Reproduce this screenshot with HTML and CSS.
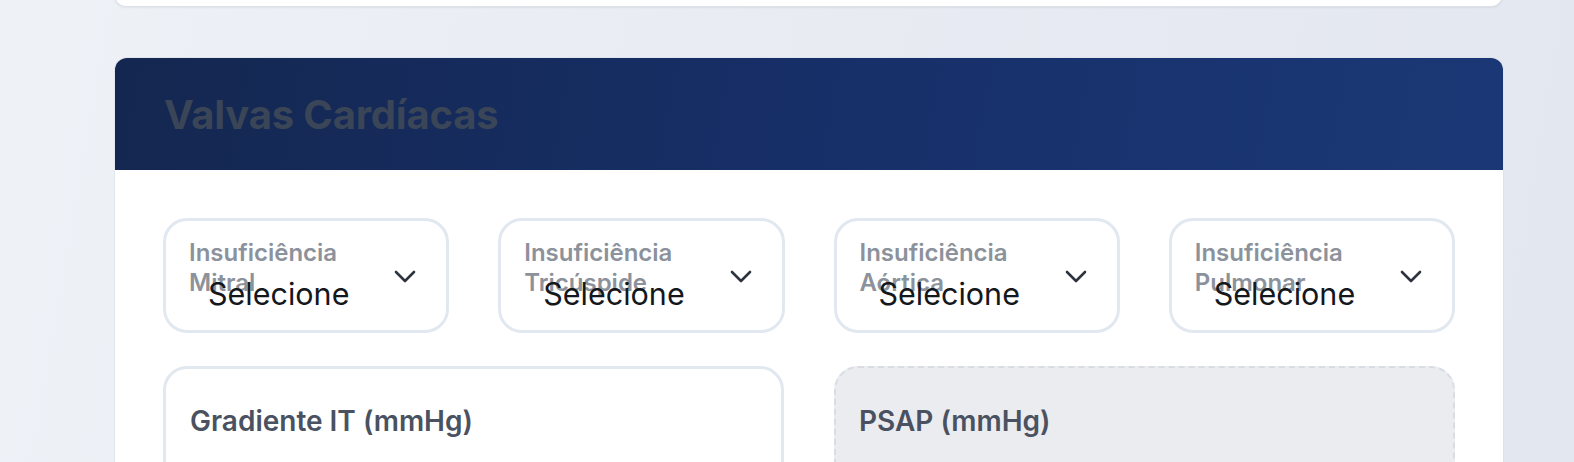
FILE: index.html
```html
<!DOCTYPE html>
<html lang="pt">
<head>
<meta charset="utf-8">
<title>Valvas Cardíacas</title>
<link rel="stylesheet" href="styles.css">
</head>
<body>
<div class="page">
  <div class="top-card"></div>
  <section class="card">
    <header class="card-header">
      <h2 class="card-title">Valvas Cardíacas</h2>
    </header>
    <div class="card-body">
      <div class="grid4">
        <div class="field">
          <span class="field-label">Insuficiência Mitral</span>
          <div class="select"><span class="select-value">Selecione</span>
            <svg class="chev" viewBox="0 0 24 24" width="24" height="24"><path d="M3 7l9 9 9-9" fill="none" stroke="#2d3440" stroke-width="2.6" stroke-linecap="round" stroke-linejoin="round"/></svg>
          </div>
        </div>
        <div class="field">
          <span class="field-label">Insuficiência Tricúspide</span>
          <div class="select"><span class="select-value">Selecione</span>
            <svg class="chev" viewBox="0 0 24 24" width="24" height="24"><path d="M3 7l9 9 9-9" fill="none" stroke="#2d3440" stroke-width="2.6" stroke-linecap="round" stroke-linejoin="round"/></svg>
          </div>
        </div>
        <div class="field">
          <span class="field-label">Insuficiência Aórtica</span>
          <div class="select"><span class="select-value">Selecione</span>
            <svg class="chev" viewBox="0 0 24 24" width="24" height="24"><path d="M3 7l9 9 9-9" fill="none" stroke="#2d3440" stroke-width="2.6" stroke-linecap="round" stroke-linejoin="round"/></svg>
          </div>
        </div>
        <div class="field">
          <span class="field-label">Insuficiência Pulmonar</span>
          <div class="select"><span class="select-value">Selecione</span>
            <svg class="chev" viewBox="0 0 24 24" width="24" height="24"><path d="M3 7l9 9 9-9" fill="none" stroke="#2d3440" stroke-width="2.6" stroke-linecap="round" stroke-linejoin="round"/></svg>
          </div>
        </div>
      </div>
      <div class="grid2">
        <div class="input-box">
          <span class="input-label">Gradiente IT (mmHg)</span>
        </div>
        <div class="input-box disabled">
          <span class="input-label">PSAP (mmHg)</span>
        </div>
      </div>
    </div>
  </section>
</div>
</body>
</html>
```

FILE: styles.css
```css
* { box-sizing: border-box; }
html, body { margin: 0; padding: 0; }
body {
  font-family: Inter, "Noto Sans", "Liberation Sans", sans-serif;
  background: linear-gradient(100deg, #eef1f6 0%, #e8ebf2 50%, #e3e7ef 100%);
  height: 462px;
  overflow: hidden;
}
.page {
  margin: 0 71px 0 114px;
  display: flex;
  flex-direction: column;
}
.top-card {
  height: 30px;
  margin-top: -23px;
  background: #fff;
  border-radius: 0 0 12px 12px;
  border: 1px solid #dde1e8;
  box-shadow: 0 1px 2px rgba(15, 23, 42, 0.06);
}
.card {
  margin-top: 51px;
  margin-left: 1px;
  background: #fff;
  border-radius: 12px 12px 0 0;
  overflow: hidden;
  box-shadow: 0 0 0 1px rgba(220, 225, 233, 0.7);
}
.card-header {
  height: 112px;
  background: linear-gradient(100deg, #142750 0%, #17306a 55%, #1b3876 100%);
  padding: 0 48px;
  display: flex;
  align-items: center;
}
.card-title {
  margin: 0;
  font-size: 40px;
  font-weight: 700;
  color: #3a4557;
  letter-spacing: -0.2px;
  padding-left: 1px;
}
.card-body {
  padding: 48px 48px 0 48px;
  display: flex;
  flex-direction: column;
  gap: 33px;
}
.grid4 {
  display: grid;
  grid-template-columns: repeat(4, 1fr);
  gap: 49px;
}
.grid2 {
  display: grid;
  grid-template-columns: repeat(2, 1fr);
  gap: 50px;
}
.field {
  position: relative;
  height: 115px;
}
.field-label {
  position: absolute;
  left: 26px;
  top: 20px;
  width: 200px;
  font-size: 24px;
  line-height: 30px;
  font-weight: 600;
  color: #8c929b;
  z-index: 1;
}
.select {
  height: 100%;
  border: 3px solid #e2e8f0;
  border-radius: 24px;
  background: #fff;
  display: flex;
  align-items: flex-start;
  padding: 0 29px 0 42px;
}
.select-value {
  position: relative;
  z-index: 2;
  font-size: 30.5px;
  line-height: 36px;
  color: #14171c;
  flex: 1;
  padding-top: 55px;
}
.chev {
  margin-top: 44px;
  flex: none;
}
.input-box {
  height: 130px;
  border: 3px solid #e2e8f0;
  border-radius: 24px;
  padding: 35px 24px;
}
.input-box.disabled {
  background: #ebecf0;
  border: 2px dashed #d9dce2;
  padding: 36px 23px;
}
.input-label {
  font-size: 28px;
  line-height: 34px;
  font-weight: 600;
  color: #4a5261;
}
```
